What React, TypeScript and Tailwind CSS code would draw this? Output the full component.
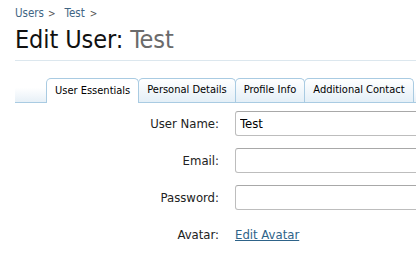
import React from 'react';

const tabs = ['User Essentials', 'Personal Details', 'Profile Info', 'Additional Contact'];

const fields = [
  { label: 'User Name:', value: 'Test' },
  { label: 'Email:', value: '' },
  { label: 'Password:', value: '' },
];

export default function App() {
  return (
    <div className="h-[256px] w-[416px] overflow-hidden bg-white pl-[15px] font-['DejaVu_Sans_Condensed','DejaVu_Sans',sans-serif] text-black">
      {/* breadcrumb */}
      <div className="flex items-baseline pt-[6px] text-[11.5px] leading-[14px]">
        <span className="text-[#3f6584]">Users</span>
        <span className="ml-[4px] text-[10px] text-[#555]">&gt;</span>
        <span className="ml-[9px] text-[#3f6584]">Test</span>
        <span className="ml-[5px] text-[10px] text-[#555]">&gt;</span>
      </div>

      <h1 className="mt-[5px] text-[25px] leading-[28px] font-normal tracking-[-0.1px] text-[#111]">
        Edit User: <span className="text-[#6b6b6b]">Test</span>
      </h1>

      <div className="mt-[6px] h-px bg-[#dce7ee]" />

      {/* tabs */}
      <div className="mt-[17px] flex h-[25px] items-end border-b border-[#a9cbe2] bg-[linear-gradient(to_bottom,#ffffff_40%,#e7f0f7)] pl-[31px]">
        {tabs.map((tab, i) => (
          <div
            key={tab}
            className={
              i === 0
                ? 'relative -mb-px flex h-[25px] shrink-0 items-center rounded-t-[5px] border border-b-0 border-[#a9cbe2] bg-white px-[8px] text-[11px]'
                : '-ml-px flex h-[24px] shrink-0 items-center rounded-t-[5px] border border-b-0 border-[#a9cbe2] bg-[linear-gradient(to_bottom,#ffffff,#e4eff7)] px-[8px] text-[11px]'
            }
          >
            {tab}
          </div>
        ))}
      </div>

      {/* form */}
      <div className="mt-[8px] flex flex-col gap-[12px] text-[13px] text-[#222]">
        {fields.map((f) => (
          <div key={f.label} className="flex h-[25px] items-center">
            <div className="w-[204px] shrink-0 text-right">{f.label}</div>
            <input
              readOnly
              value={f.value}
              className="ml-[16px] h-[25px] w-[240px] shrink-0 rounded-[3px] border border-[#bdbdbd] border-t-[#a8a8a8] bg-white px-[4px] text-[13px] text-black outline-none"
            />
          </div>
        ))}
        <div className="flex h-[25px] items-center">
          <div className="w-[204px] shrink-0 text-right">Avatar:</div>
          <a className="ml-[16px] text-[#2e6389] underline">Edit Avatar</a>
        </div>
      </div>
    </div>
  );
}
